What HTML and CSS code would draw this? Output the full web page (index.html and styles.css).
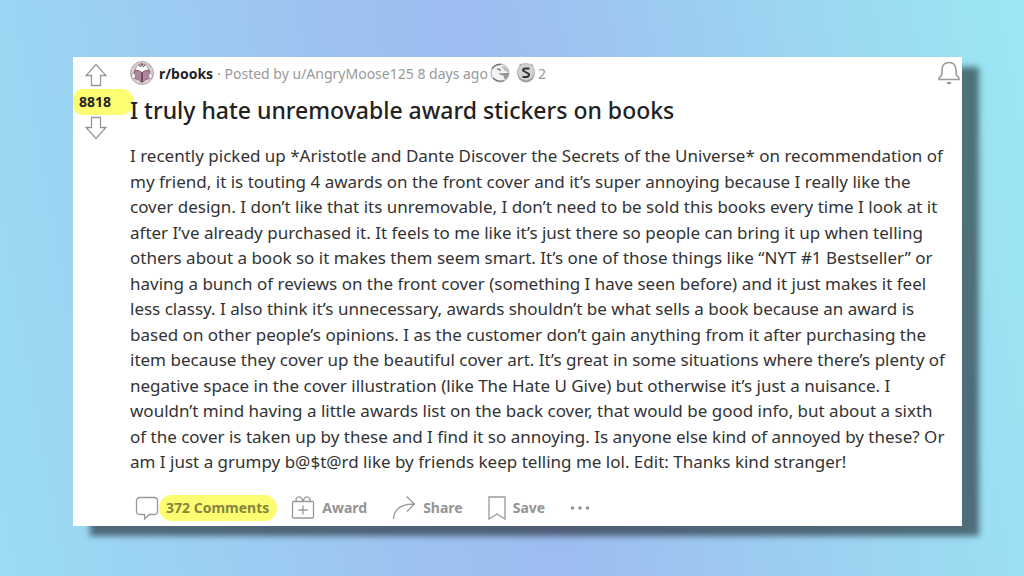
FILE: index.html
```html
<!DOCTYPE html>
<html lang="en">
<head>
<meta charset="utf-8">
<meta name="viewport" content="width=device-width, initial-scale=1">
<title>I truly hate unremovable award stickers on books</title>
<link rel="stylesheet" href="styles.css">
</head>
<body>
<main class="page">
  <article class="post">
    <aside class="votes">
      <button class="icon-button" type="button" aria-label="Upvote">
        <svg class="arrow" viewBox="0 0 24 24"><path d="M12 1.500 22 12.500H16.500V22.500H7.500V12.500H2Z"/></svg>
      </button>
      <span class="score">8818</span>
      <button class="icon-button" type="button" aria-label="Downvote">
        <svg class="arrow" viewBox="0 0 24 24"><path d="M12 22.500 22 11.500H16.500V1.500H7.500V11.500H2Z"/></svg>
      </button>
    </aside>
    <div class="content">
      <header class="meta">
        <svg class="avatar" viewBox="0 0 24 24" aria-hidden="true">
          <circle cx="12" cy="12" r="11.500" fill="#d9cdd2" stroke="#b9a7ae"/>
          <path d="M5.500 9Q6 3 12 3T18.500 9L12 12Z" fill="#fff" stroke="#8d747d" stroke-width=".7"/>
          <path d="M9 3.500 10.500 6 12 2.500 13.500 6 15 3.500" fill="none" stroke="#6f525e"/>
          <path d="M4.500 9.500Q8.500 8.500 12 11.500Q15.500 8.500 19.500 9.500V17.500Q15.500 17.500 12 21.500Q8.500 17.500 4.500 17.500Z" fill="#b0869a" stroke="#795366" stroke-width=".8"/>
          <path d="M12 11.500V21" fill="none" stroke="#5c3547" stroke-width="1.400"/>
          <ellipse cx="3.500" cy="15" rx="1.800" ry="2.800" fill="#fff" stroke="#8d747d" stroke-width=".6"/>
          <ellipse cx="20.500" cy="15" rx="1.800" ry="2.800" fill="#fff" stroke="#8d747d" stroke-width=".6"/>
        </svg>
        <a class="community" href="#">r/books</a>
        <span class="byline">· Posted by <a href="#">u/AngryMoose125</a> 8 days ago</span>
        <svg class="award" viewBox="0 0 20 20" role="img" aria-label="Wholesome award">
          <circle cx="10" cy="10" r="9" fill="#f3f3f3" stroke="#aaa"/>
          <path d="M2 6Q5 1 11 1.500" fill="none" stroke="#777" stroke-width="1.500"/>
          <path d="M7 6.500Q9.500 5 10.500 8M9.500 10.500Q12 12 18.500 10.500M3 15Q8 19.500 14 17.500" fill="none" stroke="#777" stroke-width="1.300"/>
          <path d="M11 3Q17 3 18.500 9L15 8Z" fill="#bbb"/>
          <path d="M13 12Q16 12 18.500 10.500Q18 15 15 17Z" fill="#999"/>
        </svg>
        <svg class="award silver" viewBox="0 0 20 20" role="img" aria-label="Silver award">
          <circle cx="10" cy="11" r="8.500" fill="#999"/>
          <circle cx="10" cy="9" r="8.500" fill="#d2d2d2" stroke="#aaa" stroke-width=".8"/>
          <path d="M3 2.500 5.500 1M15 1 17.500 3" stroke="#999"/>
          <path d="M13.500 5.500H9.500Q7 5.500 7 7.500L13 11Q13 14 10.500 14H6.500" fill="none" stroke="#333" stroke-width="2"/>
        </svg>
        <span class="award-count">2</span>
        <button class="icon-button bell-button" type="button" aria-label="Follow post">
          <svg class="bell" viewBox="0 0 24 24"><path d="M2 18.500V17Q5 15 5 11V8.500Q5.500 1.500 12 1.500T19 8.500V11Q19 15 22 17V18.500Z"/><path class="solid" d="M9.500 21H14.500Q14 23.500 12 23.500T9.500 21Z"/></svg>
        </button>
      </header>
      <h1 class="title">I truly hate unremovable award stickers on books</h1>
      <p class="text">I recently picked up *Aristotle and Dante Discover the Secrets of the Universe* on recommendation of<br>
my friend, it is touting 4 awards on the front cover and it’s super annoying because I really like the<br>
cover design. I don’t like that its unremovable, I don’t need to be sold this books every time I look at it<br>
after I’ve already purchased it. It feels to me like it’s just there so people can bring it up when telling<br>
others about a book so it makes them seem smart. It’s one of those things like “NYT #1 Bestseller” or<br>
having a bunch of reviews on the front cover (something I have seen before) and it just makes it feel<br>
less classy. I also think it’s unnecessary, awards shouldn’t be what sells a book because an award is<br>
based on other people’s opinions. I as the customer don’t gain anything from it after purchasing the<br>
item because they cover up the beautiful cover art. It’s great in some situations where there’s plenty of<br>
negative space in the cover illustration (like The Hate U Give) but otherwise it’s just a nuisance. I<br>
wouldn’t mind having a little awards list on the back cover, that would be good info, but about a sixth<br>
of the cover is taken up by these and I find it so annoying. Is anyone else kind of annoyed by these? Or<br>
am I just a grumpy b@$t@rd like by friends keep telling me lol. Edit: Thanks kind stranger!</p>
      <footer class="actions">
        <button class="action comments" type="button">
          <svg class="icon" viewBox="0 0 24 24"><path d="M5 1.500H19Q22.500 1.500 22.500 5V15Q22.500 18.500 19 18.500H14L9.500 23V18.500H5Q1.500 18.500 1.500 15V5Q1.500 1.500 5 1.500Z"/></svg>
          <span class="highlight">372 Comments</span>
        </button>
        <button class="action" type="button">
          <svg class="icon" viewBox="0 0 24 24"><rect x="1.500" y="5.500" width="21" height="16.500" rx="1"/><path d="M12 9.500V18.500M7.500 14H16.500M12 5.500Q10.500 .500 7.500 1Q4 2 5.500 5.500M12 5.500Q13.500 .500 16.500 1Q20 2 18.500 5.500"/></svg>
          <span>Award</span>
        </button>
        <button class="action" type="button">
          <svg class="icon" viewBox="0 0 24 24"><path d="M1.500 23Q2.500 8 22 8M14.500 .500 22.500 8 15 15.500"/></svg>
          <span>Share</span>
        </button>
        <button class="action" type="button">
          <svg class="icon bookmark" viewBox="0 0 18 24"><path d="M1 1H17V23L9 18 1 23Z"/></svg>
          <span>Save</span>
        </button>
        <button class="icon-button more" type="button" aria-label="More options">
          <svg class="dots" viewBox="0 0 20 6"><circle cx="2.500" cy="3" r="1.800"/><circle cx="10" cy="3" r="1.800"/><circle cx="17.500" cy="3" r="1.800"/></svg>
        </button>
      </footer>
    </div>
  </article>
</main>
</body>
</html>
```
FILE: styles.css
```css
* {
  box-sizing: border-box;
}

body {
  margin: 0;
  font-family: "Noto Sans", "Open Sans", sans-serif;
  color: #222;
}

.page {
  min-height: 100vh;
  padding: 57px 62px 49px 73px;
  background: linear-gradient(80deg, #9bdcf4 0%, #9dc2f0 38%, #9dbcf0 50%, #9dc6f0 62%, #9be8f3 100%);
}

.post {
  display: flex;
  background: #fff;
  box-shadow: 17px 10px 6px rgba(0, 0, 0, 0.5);
}

.icon-button,
.action {
  padding: 0;
  border: 0;
  background: none;
  font: inherit;
  color: inherit;
  cursor: pointer;
}

svg {
  display: block;
  flex: none;
  fill: none;
}

.votes {
  display: flex;
  flex: none;
  flex-direction: column;
  align-items: center;
  width: 57px;
  padding-top: 6px;
}

.votes .icon-button {
  margin-right: 11px;
}

.arrow {
  width: 24px;
  height: 24px;
  stroke: #999;
  stroke-width: 1.3;
}

.score {
  align-self: stretch;
  margin: 2px -4px 1px 0;
  padding-left: 6px;
  border-radius: 10px 14px 14px 10px;
  background: #fdfd72;
  font-size: 14px;
  font-weight: 700;
  line-height: 26px;
}

.content {
  flex: 1;
  min-width: 0;
}

.meta {
  display: flex;
  align-items: center;
  height: 32px;
  font-size: 14px;
  color: #999;
}

.meta a {
  color: inherit;
  text-decoration: none;
}

.avatar {
  width: 24px;
  height: 24px;
  margin-right: 5px;
}

.meta .community {
  margin-right: 4px;
  font-weight: 700;
  color: #222;
}

.award {
  width: 20px;
  height: 20px;
  margin-left: 2px;
}

.silver {
  margin-left: 6px;
}

.award-count {
  margin-left: 2px;
}

.bell-button {
  margin-left: auto;
  margin-right: 1px;
}

.bell {
  width: 24px;
  height: 24px;
  stroke: #999;
  stroke-width: 1.5;
}

.bell .solid {
  fill: #999;
  stroke: none;
}

.title {
  margin: 4px 0 16px;
  font-size: 23px;
  font-weight: 500;
  line-height: 34px;
}

.text {
  margin: 0;
  font-size: 17px;
  line-height: 1.5;
  color: #333;
}

.actions {
  display: flex;
  align-items: center;
  gap: 25px;
  margin-top: 20px;
  padding: 0 0 5px 5px;
  font-size: 14px;
  font-weight: 700;
  color: #949494;
}

.action {
  display: flex;
  align-items: center;
  gap: 7px;
}

.comments {
  gap: 0;
  margin-right: -11px;
}

.icon {
  width: 24px;
  height: 24px;
  stroke: #999;
  stroke-width: 1.3;
}

.bookmark {
  width: 18px;
}

.highlight {
  padding: 0 8px 0 7px;
  border-radius: 13px;
  background: #fdfd72;
  line-height: 26px;
  color: #85853f;
}

.dots {
  width: 20px;
  height: 6px;
  fill: #949494;
}
```
